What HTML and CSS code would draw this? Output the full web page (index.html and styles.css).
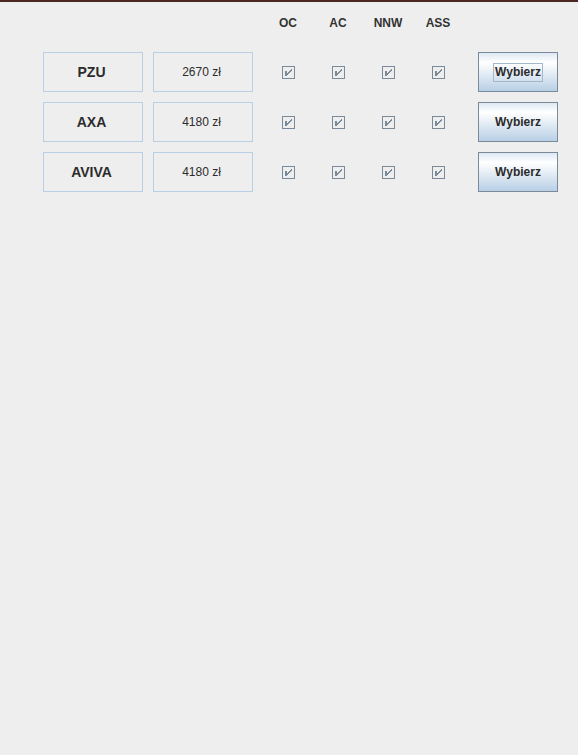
FILE: index.html
```html
<!DOCTYPE html>
<html>
<head>
<meta charset="utf-8">
<link rel="stylesheet" href="styles.css">
</head>
<body>
<div class="topbar"></div>
<div class="panel">
  <div class="header">
    <div class="spacer"></div>
    <div class="col-label">OC</div>
    <div class="col-label">AC</div>
    <div class="col-label">NNW</div>
    <div class="col-label">ASS</div>
  </div>
  <div class="row">
    <div class="name">PZU</div>
    <div class="price">2670 zł</div>
    <div class="cell"><svg class="check" viewBox="0 0 13 13" width="13" height="13"><rect x="0.5" y="0.5" width="12" height="12" fill="none" stroke="#7a8a99"/><path d="M3 5h2v3l4.5-5l1 1l-5.5 6h-2z" fill="#7a8a99"/></svg></div>
    <div class="cell"><svg class="check" viewBox="0 0 13 13" width="13" height="13"><rect x="0.5" y="0.5" width="12" height="12" fill="none" stroke="#7a8a99"/><path d="M3 5h2v3l4.5-5l1 1l-5.5 6h-2z" fill="#7a8a99"/></svg></div>
    <div class="cell"><svg class="check" viewBox="0 0 13 13" width="13" height="13"><rect x="0.5" y="0.5" width="12" height="12" fill="none" stroke="#7a8a99"/><path d="M3 5h2v3l4.5-5l1 1l-5.5 6h-2z" fill="#7a8a99"/></svg></div>
    <div class="cell"><svg class="check" viewBox="0 0 13 13" width="13" height="13"><rect x="0.5" y="0.5" width="12" height="12" fill="none" stroke="#7a8a99"/><path d="M3 5h2v3l4.5-5l1 1l-5.5 6h-2z" fill="#7a8a99"/></svg></div>
    <button class="btn"><span class="focus">Wybierz</span></button>
  </div>
  <div class="row">
    <div class="name">AXA</div>
    <div class="price">4180 zł</div>
    <div class="cell"><svg class="check" viewBox="0 0 13 13" width="13" height="13"><rect x="0.5" y="0.5" width="12" height="12" fill="none" stroke="#7a8a99"/><path d="M3 5h2v3l4.5-5l1 1l-5.5 6h-2z" fill="#7a8a99"/></svg></div>
    <div class="cell"><svg class="check" viewBox="0 0 13 13" width="13" height="13"><rect x="0.5" y="0.5" width="12" height="12" fill="none" stroke="#7a8a99"/><path d="M3 5h2v3l4.5-5l1 1l-5.5 6h-2z" fill="#7a8a99"/></svg></div>
    <div class="cell"><svg class="check" viewBox="0 0 13 13" width="13" height="13"><rect x="0.5" y="0.5" width="12" height="12" fill="none" stroke="#7a8a99"/><path d="M3 5h2v3l4.5-5l1 1l-5.5 6h-2z" fill="#7a8a99"/></svg></div>
    <div class="cell"><svg class="check" viewBox="0 0 13 13" width="13" height="13"><rect x="0.5" y="0.5" width="12" height="12" fill="none" stroke="#7a8a99"/><path d="M3 5h2v3l4.5-5l1 1l-5.5 6h-2z" fill="#7a8a99"/></svg></div>
    <button class="btn"><span class="label">Wybierz</span></button>
  </div>
  <div class="row">
    <div class="name">AVIVA</div>
    <div class="price">4180 zł</div>
    <div class="cell"><svg class="check" viewBox="0 0 13 13" width="13" height="13"><rect x="0.5" y="0.5" width="12" height="12" fill="none" stroke="#7a8a99"/><path d="M3 5h2v3l4.5-5l1 1l-5.5 6h-2z" fill="#7a8a99"/></svg></div>
    <div class="cell"><svg class="check" viewBox="0 0 13 13" width="13" height="13"><rect x="0.5" y="0.5" width="12" height="12" fill="none" stroke="#7a8a99"/><path d="M3 5h2v3l4.5-5l1 1l-5.5 6h-2z" fill="#7a8a99"/></svg></div>
    <div class="cell"><svg class="check" viewBox="0 0 13 13" width="13" height="13"><rect x="0.5" y="0.5" width="12" height="12" fill="none" stroke="#7a8a99"/><path d="M3 5h2v3l4.5-5l1 1l-5.5 6h-2z" fill="#7a8a99"/></svg></div>
    <div class="cell"><svg class="check" viewBox="0 0 13 13" width="13" height="13"><rect x="0.5" y="0.5" width="12" height="12" fill="none" stroke="#7a8a99"/><path d="M3 5h2v3l4.5-5l1 1l-5.5 6h-2z" fill="#7a8a99"/></svg></div>
    <button class="btn"><span class="label">Wybierz</span></button>
  </div>
</div>
</body>
</html>
```
FILE: styles.css
```css
html, body {
  margin: 0;
  padding: 0;
  background: #eeeeee;
  font-family: "Liberation Sans", Arial, sans-serif;
  color: #333333;
  height: 100%;
}
.topbar {
  height: 2px;
  background: #4c2620;
}
.panel {
  padding: 0 0 0 43px;
  display: flex;
  flex-direction: column;
  gap: 10px;
}
.header {
  display: flex;
  height: 40px;
  align-items: center;
}
.spacer {
  width: 220px;
}
.col-label {
  width: 50px;
  text-align: center;
  font-weight: bold;
  font-size: 12px;
  line-height: 14px;
  position: relative;
  top: 1px;
}
.row {
  display: flex;
  height: 40px;
  align-items: center;
}
.name, .price {
  box-sizing: border-box;
  width: 100px;
  height: 40px;
  border: 1px solid #b8cfe5;
  display: flex;
  align-items: center;
  justify-content: center;
  color: #2b2b2b;
  padding-right: 3px;
}
.name {
  font-weight: bold;
  font-size: 14px;
}
.price {
  font-size: 12px;
  margin-left: 10px;
  margin-right: 10px;
}
.cell {
  width: 50px;
  display: flex;
  justify-content: center;
  align-items: center;
}
.check {
  display: block;
  shape-rendering: crispEdges;
  position: relative;
  left: 0.5px;
}
.btn {
  box-sizing: border-box;
  margin-left: 15px;
  width: 80px;
  height: 40px;
  border: 1px solid #7a8a99;
  background: linear-gradient(to bottom, #dde8f3 0%, #ffffff 25%, #b8cfe5 100%);
  font-family: "Liberation Sans", Arial, sans-serif;
  font-weight: bold;
  font-size: 12px;
  color: #2b2b2b;
  padding: 0;
  display: flex;
  align-items: center;
  justify-content: center;
}
.focus {
  border: 1px solid #a3b8cc;
  padding: 1px 1px 2px 1px;
  line-height: 14px;
}
.label {
  line-height: 14px;
  padding: 2px;
}
```
